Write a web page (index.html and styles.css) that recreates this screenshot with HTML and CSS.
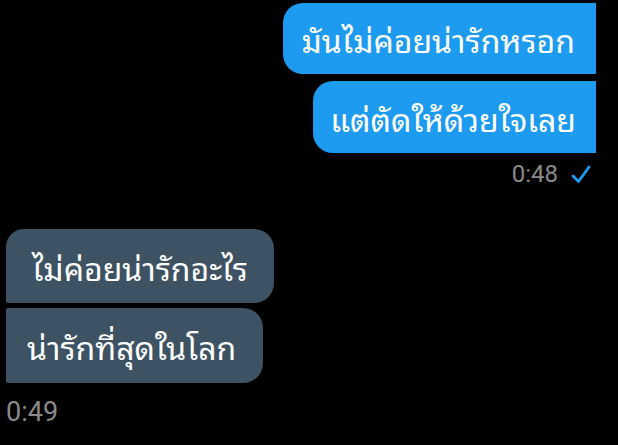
FILE: index.html
```html
<!DOCTYPE html>
<html lang="th">
<head>
<meta charset="utf-8">
<link rel="stylesheet" href="styles.css">
</head>
<body>
<div class="chat">
  <div class="group outgoing">
    <div class="bubble out first">มันไม่ค่อยน่ารักหรอก</div>
    <div class="bubble out second">แต่ตัดให้ด้วยใจเลย</div>
    <div class="meta">
      <span class="time">0:48</span>
      <svg class="check" width="22" height="22" viewBox="0 0 22 22"><path d="M3 13 L8.5 18.5 L19 4" fill="none" stroke="#1d9bf0" stroke-width="2.8" stroke-linecap="round" stroke-linejoin="round"/></svg>
    </div>
  </div>
  <div class="group incoming">
    <div class="bubble in first">ไม่ค่อยน่ารักอะไร</div>
    <div class="bubble in second">น่ารักที่สุดในโลก</div>
    <div class="meta"><span class="time big">0:49</span></div>
  </div>
</div>
</body>
</html>
```
FILE: styles.css
```css
html, body {
  margin: 0;
  background: #000;
}
body {
  width: 618px;
  height: 445px;
  overflow: hidden;
  font-family: "Noto Sans Thai Looped", "Noto Sans Thai UI", "Noto Sans Thai", "Noto Sans", Roboto, sans-serif;
}
.chat {
  display: flex;
  flex-direction: column;
  padding: 3px 22px 0 6px;
}
.group {
  display: flex;
  flex-direction: column;
}
.outgoing {
  align-items: flex-end;
  gap: 7px;
}
.incoming {
  align-items: flex-start;
  gap: 5px;
  margin-top: 42px;
}
.bubble {
  color: #fff;
  font-size: 32px;
  white-space: nowrap;
  display: flex;
  align-items: center;
}
.out {
  background: #1d9bf0;
  border-radius: 20px 0 0 20px;
  height: 71px;
  padding: 0 21px 0 19px;
}
.out.second {
  height: 72px;
  padding: 0 20px 0 17px;
}
.in {
  background: #3d5263;
  height: 74px;
  padding: 0 26px 0 26px;
}
.in.first {
  border-radius: 18px 20px 20px 2px;
}
.in.second {
  border-radius: 2px 20px 20px 2px;
  height: 75px;
  padding: 0 27px 0 21px;
}
.meta {
  display: flex;
  align-items: center;
  gap: 12px;
  height: 27px;
}
.outgoing .meta {
  margin-right: 4px;
}
.incoming .meta {
  height: 36px;
  margin-top: 6px;
}
.time {
  font-family: Roboto, sans-serif;
  font-size: 24px;
  color: #8a8a8a;
}
.time.big {
  font-size: 27px;
}
```
